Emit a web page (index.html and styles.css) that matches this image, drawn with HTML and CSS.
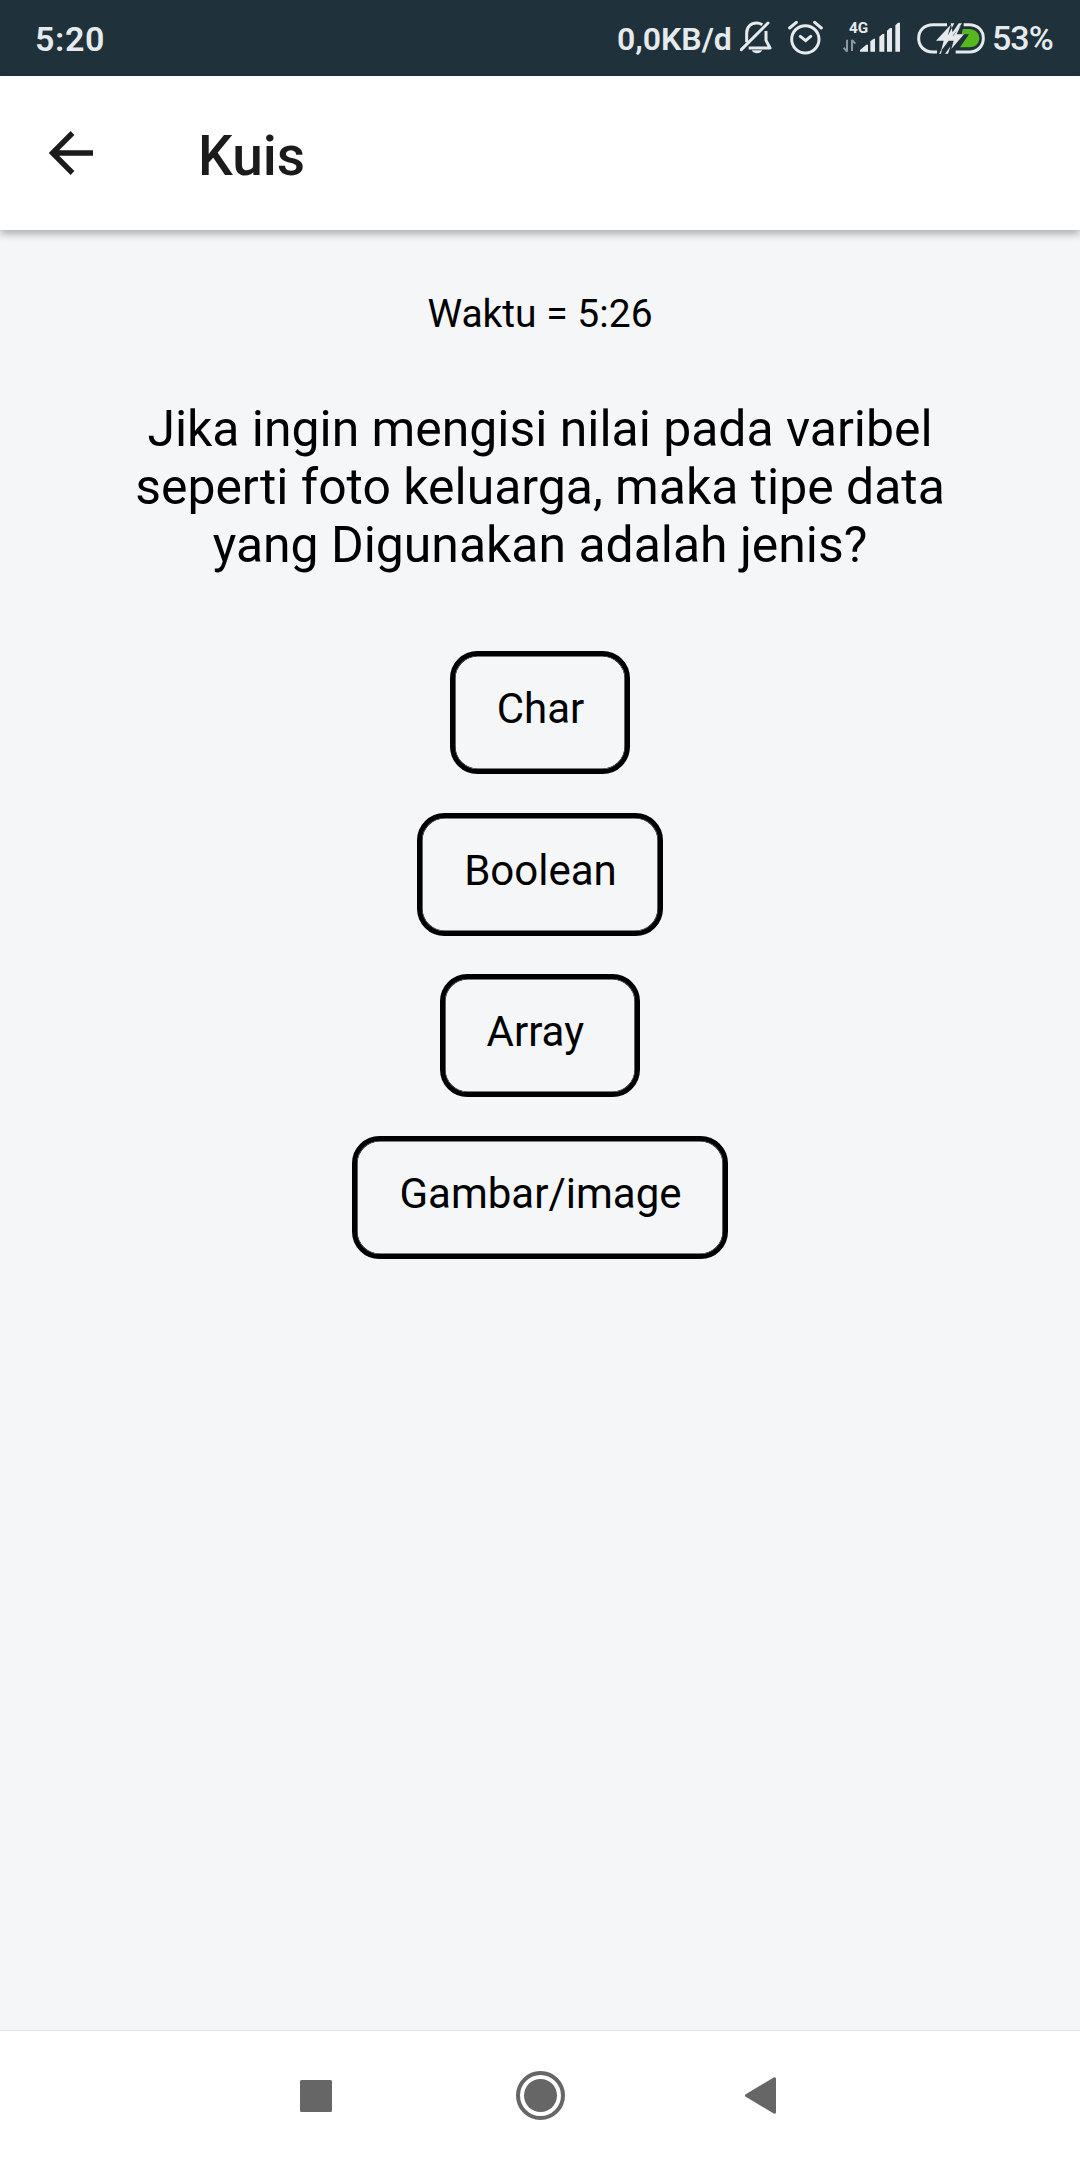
FILE: index.html
```html
<!DOCTYPE html>
<html lang="id">
<head>
<meta charset="utf-8">
<title>Kuis</title>
<link rel="stylesheet" href="styles.css">
</head>
<body>
<div class="screen">
  <div class="status">
    <span class="clock">5:20</span>
    <span class="speed">0,0KB/d</span>
    <svg class="bell" width="32" height="34" viewBox="0 0 96 102" fill="none" stroke="#e6eaed" stroke-width="9">
      <path d="M20 64V36C20 18 32 6 50 6C56 6 62 8 67 11M78 30V58L90 81H26" stroke-linejoin="round"/>
      <path d="M4 86L84 6" stroke-linecap="round"/>
      <path d="M35 88H67C64 94 58 97 51 97S38 94 35 88Z" fill="#e6eaed" stroke="none"/>
    </svg>
    <svg class="alarm" width="35" height="35" viewBox="0 0 105 105" fill="none" stroke="#e6eaed" stroke-width="9" stroke-linecap="round">
      <circle cx="52" cy="58" r="41"/>
      <path d="M5 24L25 7M80 7L100 24M37 49L53 62L68 49"/>
    </svg>
    <svg class="signal" width="58" height="36" viewBox="0 0 174 108">
      <text class="net" x="18" y="45">4G</text>
      <path d="M12 65V101M12 101L2 89M27 99V65M27 66L37 77" fill="none" stroke="#8d979d" stroke-width="6"/>
      <path d="M51 101V96L70 80H75V101ZM82 101V70L92 62H96V101ZM109 101V56L118 48H124V101ZM132 101V38L141 30H147V101ZM157 101V22L165 14H171V101Z" fill="#e6eaed"/>
    </svg>
    <svg class="battery" width="68" height="31" viewBox="0 0 204 93">
      <path d="M90 5H48C20 5 5 24 5 46S20 87 48 87H60" fill="none" stroke="#e6eaed" stroke-width="9"/>
      <path d="M140 5H156C184 5 199 24 199 46S184 87 156 87H116" fill="none" stroke="#e6eaed" stroke-width="9"/>
      <path d="M137 18H156C174 18 187 29 187 46S174 73 156 73H129L156 34H134Z" fill="#55b81f"/>
      <path d="M101 1H112L92 38H109L135 1H125L107 28ZM57 53L101 5L92 38H107L131 8L119 34H141L103 78L110 53H95L72 84L80 53ZM66 92L76 76L72 92ZM84 92L101 70L93 92Z" fill="#e6eaed"/>
    </svg>
    <span class="percent">53%</span>
  </div>
  <header class="appbar">
    <svg class="back" width="44" height="44" viewBox="0 0 44 44" fill="none" stroke="#1b1b1b" stroke-width="5.4">
      <path d="M44 22H4M23.5 2L3.5 22L23.5 42"/>
    </svg>
    <h1 class="title">Kuis</h1>
  </header>
  <main class="quiz">
    <p class="timer">Waktu = 5:26</p>
    <p class="question">Jika ingin mengisi nilai pada varibel<br>seperti foto keluarga, maka tipe data<br>yang Digunakan adalah jenis?</p>
    <div class="options">
      <button class="option">Char</button>
      <button class="option">Boolean</button>
      <button class="option">Array </button>
      <button class="option">Gambar/image</button>
    </div>
  </main>
  <nav class="navbar">
    <svg width="32" height="32" viewBox="0 0 32 32"><rect width="32" height="32" rx="1.5" fill="#666"/></svg>
    <svg class="home" width="49" height="49" viewBox="0 0 49 49"><circle cx="24.5" cy="24.5" r="22.5" fill="none" stroke="#666" stroke-width="4"/><circle cx="24.5" cy="24.5" r="16.5" fill="#666"/></svg>
    <svg width="31" height="37" viewBox="0 0 31 37"><path d="M1.5 18.5L29.5 1.8V35.2Z" fill="#666" stroke="#666" stroke-width="3" stroke-linejoin="round"/></svg>
  </nav>
</div>
</body>
</html>
```
FILE: styles.css
```css
* { box-sizing: border-box; }
body { margin: 0; font-family: Roboto, "Liberation Sans", sans-serif; }
.screen { width: 1080px; height: 2160px; display: flex; flex-direction: column; background: #f4f6f8; }
svg { display: block; flex: none; }

.status { height: 76px; flex: none; display: flex; align-items: flex-start; background: #1f313a; color: #e6eaed; white-space: nowrap; }
.clock { width: 583px; padding-left: 35px; margin-top: 19px; font-size: 34px; line-height: 40px; font-weight: 600; letter-spacing: 0.6px; }
.speed { width: 122px; margin: 19px 0 0 34px; font-size: 32px; line-height: 40px; font-weight: 600; }
.bell { margin: 21px 0 0 1px; }
.alarm { margin: 20px 0 0 16px; }
.signal { margin: 18px 0 0 20px; }
.net { font-size: 46px; font-weight: 700; fill: #e6eaed; }
.battery { margin: 23px 0 0 16px; }
.percent { margin: 18px 0 0 7px; font-size: 34px; line-height: 40px; font-weight: 500; letter-spacing: -1px; }

.appbar { height: 154px; flex: none; display: flex; align-items: center; padding-left: 49px; background: #fff; box-shadow: 0 4px 8px rgba(0,0,0,.3); }
.back { margin-right: 105px; }
.title { margin: 6px 0 0; font-size: 55px; line-height: 64px; font-weight: 500; color: #1b1b1b; }

.quiz { flex: 1; display: flex; flex-direction: column; align-items: center; padding-top: 58px; text-align: center; color: #000; }
.timer { margin: 0; font-size: 39px; line-height: 52px; }
.question { margin: 60px 0 0; font-size: 49.9px; line-height: 58px; }
.options { display: flex; flex-direction: column; align-items: center; gap: 38.7px; margin-top: 77px; }
.option { height: 123px; padding: 29px 41px 41px 42px; border: 5px solid #000; border-radius: 27.5px; box-shadow: inset 0 0 0 0.6px #000; background: none; color: #000; font: 42px/48px Roboto, "Liberation Sans", sans-serif; white-space: pre; }

.navbar { height: 130px; flex: none; display: flex; align-items: center; padding: 0 0 0 300px; background: #fff; border-top: 1px solid #e2e4e6; }
.home { margin: 0 180px 0 184px; }
```
